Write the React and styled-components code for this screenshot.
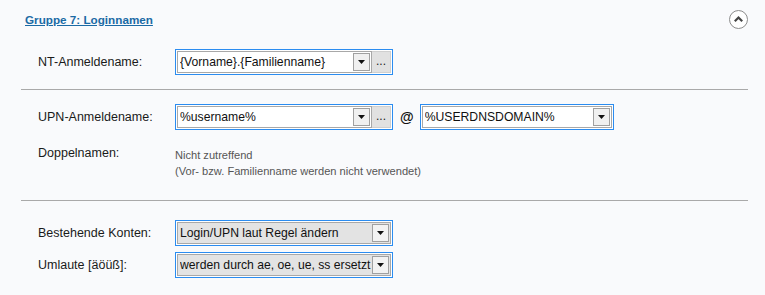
import React from 'react';
import styled, { createGlobalStyle } from 'styled-components';

const GlobalStyle = createGlobalStyle`
body {
    margin: 0;
    background: #f9fafc;
    font-family: "Liberation Sans", Arial, sans-serif;
}
`

const Combo = ({ value, width, dots, shaded }) => (
    <ComboFrame width={width}>
        <ComboField shaded={shaded}>
            <ComboText>{value}</ComboText>
            <ArrowBox shaded={shaded}>
                <svg width="7" height="4" viewBox="0 0 7 4">
                    <path d="M0 0 L7 0 L3.5 4 Z" fill="#111" />
                </svg>
            </ArrowBox>
        </ComboField>
        {dots && <DotsButton>...</DotsButton>}
    </ComboFrame>
);

const App = () => {
    return (
        <>
            <GlobalStyle />
            <Panel>
                <Header>
                    <Title>Gruppe 7: Loginnamen</Title>
                    <CollapseButton>
                        <svg width="19" height="19" viewBox="0 0 19 19">
                            <circle cx="9.5" cy="9.5" r="9" fill="#fff" stroke="#8c8c8c" strokeWidth="1" />
                            <path d="M5.8 11.2 L9.5 7.5 L13.2 11.2" fill="none" stroke="#444" strokeWidth="2.2" />
                        </svg>
                    </CollapseButton>
                </Header>

                <Section top={20} bottom={14}>
                    <Row>
                        <Label>NT-Anmeldename:</Label>
                        <Combo value="{Vorname}.{Familienname}" width={218} dots />
                    </Row>
                </Section>
                <Divider />

                <Section top={14} bottom={21}>
                    <Row>
                        <Label>UPN-Anmeldename:</Label>
                        <Combo value="%username%" width={218} dots />
                        <At>@</At>
                        <Combo value="%USERDNSDOMAIN%" width={194} />
                    </Row>
                    <InfoRow>
                        <InfoLabel>Doppelnamen:</InfoLabel>
                        <InfoText>
                            Nicht zutreffend<br />
                            (Vor- bzw. Familienname werden nicht verwendet)
                        </InfoText>
                    </InfoRow>
                </Section>
                <Divider />

                <Section top={19} bottom={17}>
                    <Stack>
                        <Row>
                            <Label>Bestehende Konten:</Label>
                            <Combo value="Login/UPN laut Regel ändern" width={218} shaded />
                        </Row>
                        <Row>
                            <Label>Umlaute [äöüß]:</Label>
                            <Combo value="werden durch ae, oe, ue, ss ersetzt" width={218} shaded />
                        </Row>
                    </Stack>
                </Section>
            </Panel>
        </>
    );
};

export default App;

const Panel = styled.div`
padding: 0 17px 0 21px;
color: #1a1a1a;
font-size: 12.5px;
`
const Header = styled.div`
display: flex;
justify-content: space-between;
align-items: center;
padding: 10px 0 0 4px;
height: 19px;
`
const Title = styled.a`
color: #1b6aa5;
font-weight: bold;
font-size: 11.7px;
text-decoration: underline;
cursor: pointer;
`
const CollapseButton = styled.div`
width: 19px;
height: 19px;
display: flex;
`
const Section = styled.div`
padding: ${p => p.top}px 0 ${p => p.bottom}px 17px;
`
const Stack = styled.div`
display: flex;
flex-direction: column;
gap: 6px;
`
const Divider = styled.div`
height: 1px;
background: #a9a9a9;
`
const Row = styled.div`
display: flex;
align-items: center;
height: 26px;
`
const Label = styled.div`
width: 137px;
flex-shrink: 0;
font-size: 12.5px;
color: #1a1a1a;
`
const ComboFrame = styled.div`
box-sizing: border-box;
width: ${p => p.width}px;
height: 26px;
border: 1px solid #2b8cf0;
padding: 1px;
background: #fff;
display: flex;
`
const ComboField = styled.div`
flex: 1;
min-width: 0;
display: flex;
align-items: center;
border: 1px solid #a8a8a8;
background: ${p => p.shaded ? '#e3e3e3' : '#fff'};
padding: 0 1px 0 2px;
`
const ComboText = styled.span`
flex: 1;
min-width: 0;
overflow: hidden;
white-space: nowrap;
font-size: 12.2px;
color: #111;
`
const ArrowBox = styled.div`
box-sizing: border-box;
width: 17px;
height: 18px;
flex-shrink: 0;
border: 1px solid #a0a0a0;
background: ${p => p.shaded ? '#f2f2f2' : '#f0f0f0'};
display: flex;
align-items: center;
justify-content: center;
`
const DotsButton = styled.div`
box-sizing: border-box;
width: 19px;
flex-shrink: 0;
background: #e1e1e1;
border: 1px solid #cfcfcf;
border-left: none;
display: flex;
align-items: flex-end;
justify-content: center;
padding-bottom: 5px;
font-size: 12px;
color: #222;
line-height: 1;
`
const At = styled.span`
font-weight: bold;
font-size: 14px;
margin: 0 6px 0 7px;
color: #111;
`
const InfoRow = styled.div`
display: flex;
align-items: flex-start;
margin-top: 17px;
`
const InfoLabel = styled(Label)`
line-height: 16px;
margin-top: -2px;
`
const InfoText = styled.div`
font-size: 11.1px;
line-height: 16px;
color: #555;
`
